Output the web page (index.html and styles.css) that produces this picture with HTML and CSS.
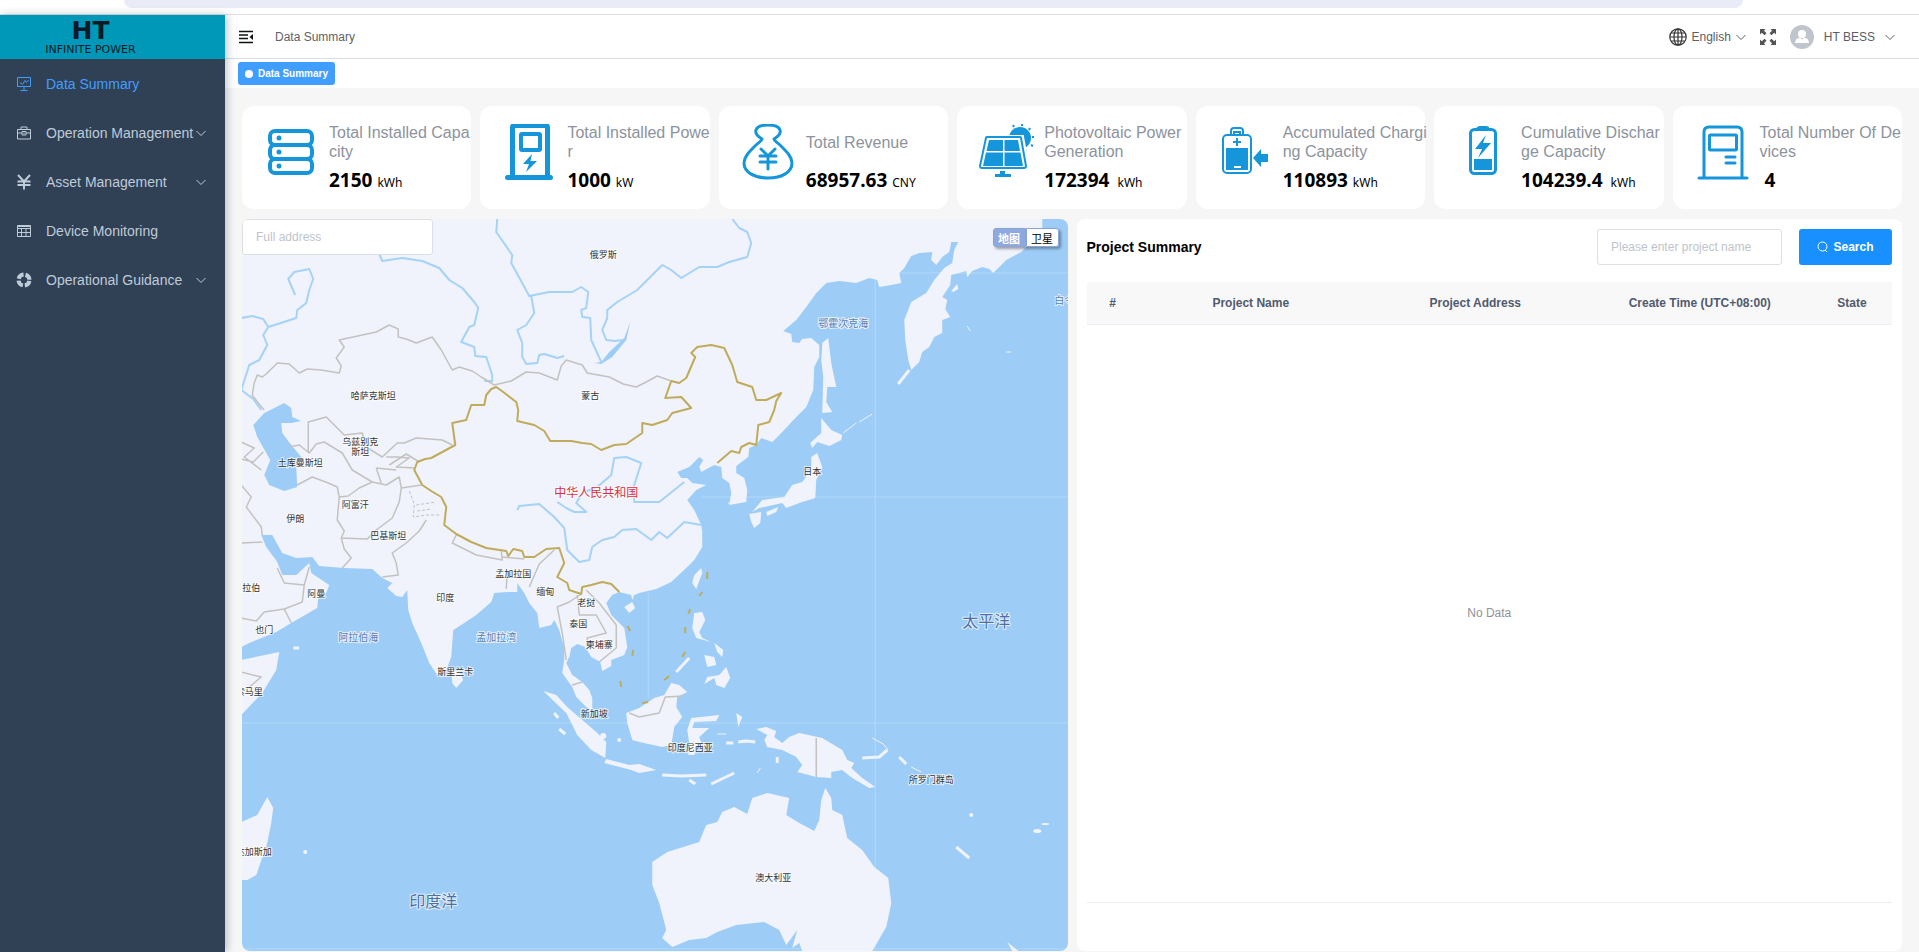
FILE: index.html
```html
<!DOCTYPE html>
<html lang="en">
<head>
    <meta charset="UTF-8">
    <meta name="viewport" content="width=device-width, initial-scale=1.0">
    <title>Data Summary</title>
    <link rel="stylesheet" href="styles.css">
</head>
<body>
    <div class="top-strip"><div class="strip-bar"></div></div>

    <div class="app">
        <!-- Sidebar -->
        <aside class="sidebar">
            <div class="logo">
                <span class="logo-name">HT</span>
                <span class="logo-sub">INFINITE POWER</span>
            </div>
            <nav>
                <a href="#" class="menu-item active">
                    <svg class="menu-icon" viewBox="0 0 16 16"><path d="M1.500 1.500h13v9h-13zM8 10.500v4M4.500 14.500h7M4 6.500l2.500 2 2.500-4 1.500 2 2-2.500"/></svg>
                    <span>Data Summary</span>
                </a>
                <a href="#" class="menu-item">
                    <svg class="menu-icon" viewBox="0 0 16 16"><path d="M1.500 4.500h13v9.500h-13zM5 4.500v-2.500h6v2.500M1.500 8h4.500M10 8h4.500M6 6.500h4v3.500h-4zM8 7.500v1.500"/></svg>
                    <span>Operation Management</span>
                    <svg class="arrow" viewBox="0 0 10 10"><path d="M.5 3l4.500 4.500L9.500 3"/></svg>
                </a>
                <a href="#" class="menu-item">
                    <svg class="menu-icon thick" viewBox="0 0 16 16"><path d="M2 1l6 6.500L14 1M8 7.500v8M1.500 7.500h13M1.500 11h13"/></svg>
                    <span>Asset Management</span>
                    <svg class="arrow" viewBox="0 0 10 10"><path d="M.5 3l4.500 4.500L9.500 3"/></svg>
                </a>
                <a href="#" class="menu-item">
                    <svg class="menu-icon" viewBox="0 0 16 16"><path d="M1.500 2.500h13v11h-13zM1.500 5.500h13M1.500 9.500h13M5.500 5.500v8M10 5.500v8M1.500 3.500h13"/></svg>
                    <span>Device Monitoring</span>
                </a>
                <a href="#" class="menu-item">
                    <svg class="menu-icon" viewBox="0 0 16 16"><circle class="ring" cx="8" cy="8" r="5.500"/></svg>
                    <span>Operational Guidance</span>
                    <svg class="arrow" viewBox="0 0 10 10"><path d="M.5 3l4.500 4.500L9.500 3"/></svg>
                </a>
            </nav>
        </aside>

        <div class="main">
            <!-- Header -->
            <header class="header">
                <button type="button" class="icon-btn" aria-label="Collapse menu">
                    <svg width="16" height="14" viewBox="0 0 16 14"><path d="M1 1.500h14M1 5h9M1 8.500h9M1 12.500h14" fill="none" stroke="#111" stroke-width="1.500"/><path d="M15 4v6l-3.500-3z" fill="#111"/></svg>
                </button>
                <span class="crumb">Data Summary</span>
                <div class="header-right">
                    <button type="button" class="icon-btn lang">
                        <svg width="18" height="18" viewBox="0 0 18 18" fill="none" stroke="#333" stroke-width="1.200"><circle cx="9" cy="9" r="8.200"/><ellipse cx="9" cy="9" rx="4" ry="8.200"/><path d="M9 1v16M1 9h16M2.200 5h13.600M2.200 13h13.600"/></svg>
                        <span>English</span>
                        <svg class="arrow" viewBox="0 0 10 10"><path d="M.5 3l4.500 4.500L9.500 3"/></svg>
                    </button>
                    <button type="button" class="icon-btn" aria-label="Full screen">
                        <svg width="16" height="16" viewBox="0 0 16 16" fill="#555"><path d="M0 0h5.500L4 1.700l2.500 2.600-2 2L1.800 3.800 0 5.500zM16 0v5.500l-1.800-1.700-2.700 2.500-2-2L12 1.700 10.500 0zM0 16v-5.500l1.800 1.700 2.700-2.500 2 2L4 14.300 5.500 16zM16 16h-5.500l1.500-1.700-2.500-2.600 2-2 2.700 2.500 1.800-1.700z"/></svg>
                    </button>
                    <button type="button" class="icon-btn user">
                        <svg width="24" height="24" viewBox="0 0 24 24"><circle cx="12" cy="12" r="12" fill="#c0c4cc"/><circle cx="12" cy="9" r="4" fill="#fff"/><path d="M5 18c0-3 2-5 5-5.500l2 2 2-2c3 .5 5 2.500 5 5.500z" fill="#fff"/></svg>
                        <span>HT BESS</span>
                        <svg class="arrow" viewBox="0 0 10 10"><path d="M.5 3l4.500 4.500L9.500 3"/></svg>
                    </button>
                </div>
            </header>
            <div class="tags">
                <a href="#" class="tag">Data Summary</a>
            </div>

            <main class="content">
                <!-- Totals -->
                <section class="cards">
                    <div class="card">
                        <svg class="card-icon" viewBox="0 0 56 56" fill="none" stroke="#1596db" stroke-width="4"><rect x="7" y="7" width="42" height="14" rx="5"/><rect x="7" y="21" width="42" height="14" rx="5"/><rect x="7" y="35" width="42" height="14" rx="5"/><g fill="#1596db" stroke="none"><circle cx="16" cy="14" r="2.500"/><circle cx="16" cy="28" r="2.500"/><circle cx="16" cy="42" r="2.500"/></g></svg>
                        <div class="card-text">
                            <p class="card-title">Total Installed Capacity</p>
                            <p class="card-value">2150 <small>kWh</small></p>
                        </div>
                    </div>
                    <div class="card">
                        <svg class="card-icon" viewBox="0 0 56 56" fill="none" stroke="#1596db" stroke-width="4"><path d="M11.500 52V3.500q0-2 2-2h31q2 0 2 2V52" stroke-width="5"/><rect x="20" y="10" width="19" height="16" rx="1"/><path d="M6.500 53.500h43" stroke-width="5" stroke-linecap="round"/><path d="M31 30L22 40h6l-3 8 11-11h-6.500z" fill="#1596db" stroke="none"/></svg>
                        <div class="card-text">
                            <p class="card-title">Total Installed Power</p>
                            <p class="card-value">1000 <small>kW</small></p>
                        </div>
                    </div>
                    <div class="card">
                        <svg class="card-icon" viewBox="0 0 56 56" fill="none" stroke="#1596db" stroke-width="3"><path d="M22 15c-5-3-7-6-6-9 1-3 6-5 12-5s11 2 12 5c1 3-1 6-6 9 0 2 3 3 7 7 6 6 11 11 11 17 0 9-10 15-24 15S4 48 4 39c0-6 5-11 11-17 4-4 7-5 7-7z"/><path d="M21 25l7 7 7-7M28 32v13M20 32h16M20 38h16" stroke-linecap="round"/></svg>
                        <div class="card-text">
                            <p class="card-title">Total Revenue</p>
                            <p class="card-value">68957.63 <small>CNY</small></p>
                        </div>
                    </div>
                    <div class="card">
                        <svg class="card-icon" viewBox="0 0 56 56"><circle cx="42" cy="14" r="11" fill="#1596db"/><path d="M44 0v2M52 4l-1 2M56 13h-2M55 22l-2-1M48 28l-1-2M35 1l1 2" stroke="#1596db" stroke-width="2"/><path d="M8 13h36l6 32H1z" fill="#fff" stroke="#fff" stroke-width="4"/><path d="M8 14q0-1 1-1h33q1 0 1 1l5 28q0 2-2 2H4q-2 0-2-2z" fill="#fff" stroke="#1596db" stroke-width="2"/><path d="M11 16h14v11H8.500zM26.500 16H40l2 11H26.500zM8 28.500h17V42H5zM26.500 28.500h16L45 42H26.500z" fill="#1596db"/><path d="M22 47h5v3h6v3H17v-3h5z" fill="#1596db"/></svg>
                        <div class="card-text">
                            <p class="card-title">Photovoltaic Power Generation</p>
                            <p class="card-value">172394 <small>&nbsp;kWh</small></p>
                        </div>
                    </div>
                    <div class="card">
                        <svg class="card-icon" viewBox="0 0 56 56" fill="none" stroke="#1596db" stroke-width="2"><rect x="6" y="11" width="28" height="38" rx="4"/><path d="M14 11V7q0-3 3-3h6q3 0 3 3v4M17 11V8h6v3M20 14v8M16 18h8"/><path d="M9 24h22v22H9z" fill="#1596db" stroke="none"/><path d="M17 43h7" stroke="#fff"/><path d="M36 34l8-9v5h7v8h-7v5z" fill="#1596db" stroke="none"/></svg>
                        <div class="card-text">
                            <p class="card-title">Accumulated Charging Capacity</p>
                            <p class="card-value">110893 <small>kWh</small></p>
                        </div>
                    </div>
                    <div class="card">
                        <svg class="card-icon" viewBox="0 0 56 56" fill="none" stroke="#1596db" stroke-width="3"><rect x="15.500" y="5.500" width="25" height="44" rx="4"/><path d="M21 5q1-3 4-3h6q3 0 4 3z" fill="#1596db" stroke="none"/><path d="M19 35h18v11H19zM31 11L20 25h7l-4 9 13-15h-8z" fill="#1596db" stroke="none"/></svg>
                        <div class="card-text">
                            <p class="card-title">Cumulative Discharge Capacity</p>
                            <p class="card-value">104239.4 <small>&nbsp;kWh</small></p>
                        </div>
                    </div>
                    <div class="card">
                        <svg class="card-icon" viewBox="0 0 56 56" fill="none" stroke="#1596db" stroke-width="3"><path d="M10 53V8q0-5 5-5h28q5 0 5 5v45"/><path d="M5 54h48" stroke-linecap="round"/><rect x="15.500" y="11" width="27" height="15" rx="1"/><path d="M32 33h9M32 39h9" stroke-linecap="round"/></svg>
                        <div class="card-text">
                            <p class="card-title">Total Number Of Devices</p>
                            <p class="card-value">&nbsp;4</p>
                        </div>
                    </div>
                </section>

                <section class="panels">
                    <!-- Map -->
                    <div class="map">
                        <svg class="map-canvas" viewBox="0 0 827 732" preserveAspectRatio="xMidYMid slice">
                            <rect class="sea" width="827" height="732"/>
                            <path class="grid" d="M634 0V732M460 278H827M0 504H827M640 54H827M407 374V480M0 730H827"/>
                            <g class="land">
                                <!-- Eurasia -->
                                <path d="M0 0H801V11L780 33 765 41 752 54 748 50 741 48 731 52 726 58 725 52 718 54 710 56 709 66 701 78 706 81 704 90 709 98 701 101 701 114 693 118 688 128 681 133 678 143 670 151 667 141 664 121 663 101 670 83 685 74 693 61 703 49 711 44 713 31 717 23 710 23 708 33 701 38 695 46 690 41 691 33 678 34 670 37 663 49 658 54 660 64 650 66 638 68 636 61 628 59 615 64 598 62 585 64 575 74 565 88 555 101 542 112 550 115 551 123 558 124 561 120 570 119 578 126 578 138 573 148 572 171 565 188 555 198 541 213 531 223 520 219 515 226 508 229 507 238 495 247 495 254 503 259 506 271 505 283 488 286 490 274 488 264 481 259 480 248 473 246 460 253 458 248 462 241 458 238 448 248 436 253 440 259 446 259 451 264 465 266 455 271 446 281 453 291 460 306 461 313 461 328 453 341 447 347 430 363 415 370 398 374 393 376 391 381 390 376 378 373 371 376 365 384 370 396 383 409 386 428 383 436 370 441 370 447 361 452 359 443 350 438 344 428 336 425 330 429 328 438 325 444 331 456 341 463 348 471 351 479 351 491 345 488 335 478 331 468 321 454 323 441 323 429 318 411 313 401 310 406 298 409 296 394 288 384 283 374 276 364 276 373 266 373 253 374 250 383 235 396 223 404 212 411 210 438 205 451 196 456 188 444 180 424 171 404 167 391 166 371 161 378 155 377 146 369 151 364 141 359 131 350 103 349 78 347 71 338 55 339 41 334 31 316 20 316 25 328 36 343 41 356 55 356 68 344 70 354 88 366 85 374 77 379 76 389 50 404 35 413 8 424 0 428z"/>
                                <!-- Africa -->
                                <path d="M0 441L38 433 35 451 21 474 0 496zM0 603L16 596 26 578 32 589 30 604 26 624 15 656 6 661 0 661z"/>
                                <!-- Islands of Asia -->
                                <path d="M210 449L218 453 222 461 215 469 211 464zM302 472L315 476 326 488 341 501 355 513 365 523 364 539 350 531 336 516 325 494zM365 540L388 546 398 545 415 551 398 554 390 551 363 544zM383 388L391 383 394 389 388 394zM385 494L386 504 391 521 398 523 421 528 430 526 433 508 441 498 435 488 436 478 446 473 438 466 430 464 423 476 413 479 398 489zM448 524L446 511 450 499 478 496 475 502 453 503 451 509 468 509 458 518 463 531 456 528 453 536 447 536zM453 394L461 393 464 401 458 413 461 419 470 423 455 419 451 409zM466 458L478 456 485 448 489 459 483 469 475 466 473 459 463 465zM463 436L473 438 475 446 466 448zM473 424L482 431 481 438 476 433zM453 356L460 349 461 354 455 370 451 364zM495 494L501 498 497 508z"/>
                                <!-- Japan and Sakhalin -->
                                <path d="M580 199L590 211 601 216 600 221 588 227 576 223 571 229 569 224 580 214zM570 238L576 234 581 248 575 261 574 279 558 284 545 289 541 284 518 289 511 293 521 281 543 278 551 266 561 263 570 251zM508 295L520 293 519 304 513 309 510 303zM525 293L537 288 535 293 526 297zM581 124L587 119 590 144 595 168 586 168 585 183 591 193 581 194 582 158 580 141zM710 72L716 65 717 70 712 73z"/>
                                <!-- New Guinea and Australia -->
                                <path d="M515 510L525 508 535 512 533 518 541 524 548 518 558 514 581 519 601 531 606 541 613 544 610 549 621 559 634 568 628 569 611 559 601 551 590 553 590 559 575 558 556 553 561 546 555 538 541 531 526 528 523 521 526 516zM411 643L426 633 458 623 465 606 476 603 481 593 493 588 506 595 511 579 526 574 548 579 545 596 558 604 573 612 578 601 580 581 584 569 590 579 591 591 601 596 606 619 621 631 633 648 647 659 650 684 645 708 631 732 561 732 558 724 551 729 556 711 545 726 538 711 523 703 495 706 476 713 465 719 448 721 431 728 421 719 425 711 418 684 411 666zM766 723L777 732 771 732z"/>
                                <ellipse cx="796" cy="612" rx="4" ry="2"/><ellipse cx="804" cy="605" rx="4" ry="1"/><circle cx="730" cy="596" r="2"/><circle cx="64" cy="633" r="2"/><circle cx="378" cy="521" r="2"/><circle cx="362" cy="517" r="3"/>
                            </g>
                            <path class="isles" d="M448 439L435 453M421 556L440 557 465 556M448 561L454 565M470 565L493 554M497 523L505 522 514 523M485 524H492M621 539L638 538 646 531M658 538L665 545M668 151L657 165M715 628L728 639M52 429H58M536 538V544M318 510L324 515M313 494L317 499"/>
                            <path class="isles thin" d="M631 519L642 525 647 531M602 214L615 204M618 203L631 195M726 107L729 112M765 133H770M519 549L516 554M670 548L680 553M690 556L702 566M476 515H485M487 284H492"/>
                            <!-- Lakes -->
                            <path class="sea" d="M12 206L23 194 43 184 50 189 51 198 60 202 50 204 40 204 41 214 50 226 60 238 55 248 56 268 43 272 28 266 23 256 29 241 16 218zM389 103L385 121 371 138 360 145 353 144 360 143 368 133 383 119z"/>
                            <g class="river">
                                <path d="M138 35L141 42 161 39 181 42 198 49 208 61 221 69 233 83 237 89 233 106 228 108 220 123 233 128 234 137 245 138 251 156 251 162 243 162"/>
                                <path d="M256 0L255 13 271 36 270 44 288 77 308 73 331 73 340 68 347 73 345 89 340 91 341 98 349 99 350 121 360 143M290 77L293 94 285 106 276 111 281 124 281 138 285 145 296 144 298 136 303 135 316 139 323 137"/>
                                <path d="M491 0L498 9 506 13 510 24 506 38 488 43 476 48 458 48 440 59 430 51 421 46 411 56 396 71 376 83 366 91 366 99 361 111 365 121 374 122 381 121"/>
                                <path d="M0 99L11 97 22 100 27 108 55 99 56 91 65 84 68 71 72 60 68 50 53 53 47 60 54 76M27 108L22 116 26 126 18 141 8 146 0 171 12 180 20 191"/>
                                <path d="M276 291L278 287 298 285 313 298 323 309 326 331 338 343 348 341 351 328 361 321 373 318 381 311 395 310 410 321 418 313 426 319 443 303 460 306"/>
                                <path d="M316 283L325 289 333 293 345 293 335 284 341 274 356 268 370 256 373 239 385 238 400 244 393 266 393 283 418 283 443 263"/>
                            </g>
                            <g class="border">
                                <path d="M23 191L17 184 11 176 13 164 16 156 21 158 25 155 36 144 48 145 58 154 66 150 80 151 98 154 100 147 95 139 103 128 98 121 135 113 148 106 157 110 157 118 165 120 175 124 191 118 200 131 211 151 218 148 231 152 240 158 253 166 270 162 285 153 298 154 316 161 320 147 325 141 341 146 346 154 368 158 382 165 395 168 405 163 416 157 430 162"/>
                                <path d="M67 233V203L85 198 103 216 121 214 125 228 141 238 156 224 163 224 175 219 201 221 211 226M48 228L58 226 68 234 75 225 83 223 101 234 111 251 131 263 118 269 107 277 98 278 96 268 87 264 71 258 56 266"/>
                                <path d="M98 278L96 301 103 312 100 319 126 320 135 311 151 299 158 283 160 269 180 266M131 263L145 266 158 258 160 269M100 319L103 330 110 339 101 349M185 301L178 312 165 324 151 334 155 344 157 356 141 358"/>
                                <path d="M135 249L140 264M145 238L156 238 168 239 155 248 173 249M148 246L165 235 178 243M135 249L155 251M215 316L211 324 235 336 261 341 260 331M261 338L283 340M266 351L265 370M313 331L298 345 288 368"/>
                                <path d="M340 375L328 383 316 388 321 414 325 441M336 376L338 396 355 396 365 414 346 419 346 431M345 371L358 384 375 406 375 429 358 443M331 466L341 463"/>
                                <path d="M0 223L13 229 3 238 20 251M0 240L12 243 22 233M0 266L10 278 5 288 20 308 21 316M0 324L21 323M0 399L15 402 23 393 43 390 61 383 63 366 68 348M36 349L43 364 63 366M43 390L50 404M0 453L20 458 8 468"/>
                                <path d="M388 494L398 498 418 494 424 478 443 477M575 519V558"/>
                                <path class="dotted" d="M168 272L173 285 172 298 185 296 200 296M175 286L195 283M176 292L190 290"/>
                            </g>
                            <path class="china" d="M476 244L490 232 498 234 500 228 508 224 515 226 517 206 528 203 533 191 535 182 540 174 525 181 515 181 511 168 496 163 491 146 483 129 470 126 456 128 450 134 454 138 445 159 438 164 430 162 424 179 440 178 450 189 431 194 426 201 411 206 401 204 401 214 385 225 373 226 360 231 350 225 341 224 330 222 309 222 303 212 293 206 276 202 277 191 275 183 262 173 255 168 250 170 245 176 243 186 230 186 225 201 211 204 214 226 190 239 184 240 176 243 173 251 181 266 190 272 200 278 205 288 203 306 215 315 230 323 245 329 265 332 267 337 272 330 281 332 283 338 293 338 305 330 318 329 323 344 316 358 326 364 328 371 340 375 341 368 350 366 361 363 370 365 378 373"/>
                            <path class="china" d="M466 353V360M461 373L458 377M449 390L447 395M444 408V414M444 433L441 438M428 457L423 461M407 483L401 484M386 407L389 412M392 431L391 437M379 462L380 468"/>
                            <g class="label">
                                <text x="362" y="39">俄罗斯</text>
                                <text x="132" y="180">哈萨克斯坦</text>
                                <text x="349" y="180">蒙古</text>
                                <text x="119" y="226">乌兹别克</text>
                                <text x="119" y="236">斯坦</text>
                                <text x="59" y="247">土库曼斯坦</text>
                                <text x="114" y="289">阿富汗</text>
                                <text x="54" y="303">伊朗</text>
                                <text x="147" y="320">巴基斯坦</text>
                                <text x="272" y="358">孟加拉国</text>
                                <text x="571" y="256">日本</text>
                                <text x="10" y="372">拉伯</text>
                                <text x="75" y="378">阿曼</text>
                                <text x="204" y="382">印度</text>
                                <text x="304" y="376">缅甸</text>
                                <text x="345" y="387">老挝</text>
                                <text x="337" y="408">泰国</text>
                                <text x="358" y="429">柬埔寨</text>
                                <text x="23" y="414">也门</text>
                                <text x="214" y="456">斯里兰卡</text>
                                <text x="8" y="476">索马里</text>
                                <text x="353" y="498">新加坡</text>
                                <text x="449" y="532">印度尼西亚</text>
                                <text x="690" y="564">所罗门群岛</text>
                                <text x="532" y="662">澳大利亚</text>
                                <text x="8" y="636">马达加斯加</text>
                            </g>
                            <g class="label water">
                                <text x="602" y="108">鄂霍次克海</text>
                                <text x="828" y="85">白令海</text>
                                <text x="117" y="422">阿拉伯海</text>
                                <text x="255" y="422">孟加拉湾</text>
                            </g>
                            <g class="label ocean">
                                <text x="745" y="408">太平洋</text>
                                <text x="192" y="688">印度洋</text>
                            </g>
                            <text class="label capital" x="355" y="278">中华人民共和国</text>
                        </svg>
                        <input type="text" class="text-input map-search" placeholder="Full address" aria-label="Full address">
                        <div class="map-type">
                            <button type="button" class="selected">地图</button>
                            <button type="button">卫星</button>
                        </div>
                    </div>

                    <!-- Projects -->
                    <div class="projects">
                        <form class="projects-head">
                            <h2>Project Summary</h2>
                            <input type="text" class="text-input" placeholder="Please enter project name" aria-label="Project name">
                            <button type="button" class="search-btn">
                                <svg width="12" height="12" viewBox="0 0 12 12" fill="none" stroke="#fff"><circle cx="5.500" cy="5.500" r="4.500"/><path d="M8 9l2 2"/></svg>
                                <span>Search</span>
                            </button>
                        </form>
                        <table>
                            <thead>
                                <tr>
                                    <th class="col-index">#</th>
                                    <th>Project Name</th>
                                    <th>Project Address</th>
                                    <th>Create Time (UTC+08:00)</th>
                                    <th class="col-state">State</th>
                                </tr>
                            </thead>
                        </table>
                        <div class="empty">No Data</div>
                    </div>
                </section>
            </main>
        </div>
    </div>
</body>
</html>
```

FILE: styles.css
```css
* {
    box-sizing: border-box;
}

body {
    margin: 0;
    min-height: 100vh;
    display: flex;
    flex-direction: column;
    font-family: "Liberation Sans", Arial, "Noto Sans CJK SC", sans-serif;
    font-size: 12px;
    color: #606266;
    background-color: #fff;
}

p, h2 {
    margin: 0;
}

button {
    font-family: inherit;
    cursor: pointer;
}

.top-strip {
    height: 15px;
    padding: 0 176px 0 124px;
    border-bottom: 1px solid #dfe1e0;
}

.strip-bar {
    height: 8px;
    background-color: #e9ecf7;
    border-radius: 0 0 12px 12px;
}

.app {
    flex: 1;
    display: flex;
}

/* Sidebar */
.sidebar {
    width: 225px;
    flex-shrink: 0;
    background-color: #304156;
    box-shadow: 2px 0 8px rgba(0, 21, 41, .25);
    z-index: 1;
}

.logo {
    height: 44px;
    padding-right: 44px;
    display: flex;
    flex-direction: column;
    align-items: center;
    justify-content: center;
    gap: 3px;
    font-family: "DejaVu Sans", sans-serif;
    color: #0b1a26;
    background-color: #0098b8;
}

.logo-name {
    font-size: 25px;
    line-height: 22px;
    font-weight: bold;
}

.logo-sub {
    font-size: 11px;
    line-height: 10px;
}

.menu-item {
    display: flex;
    align-items: center;
    height: 49px;
    padding: 0 19px 0 16px;
    font-size: 14px;
    color: #bfcbd9;
    text-decoration: none;
}

.menu-item span {
    flex: 1;
    white-space: nowrap;
}

.menu-item.active {
    color: #409eff;
}

.menu-icon {
    width: 16px;
    height: 16px;
    flex-shrink: 0;
    margin-right: 14px;
    fill: none;
    stroke: currentColor;
}

.menu-icon.thick {
    stroke-width: 2;
}

.ring {
    stroke-width: 4;
    stroke-dasharray: 6.600 2;
    stroke-dashoffset: -1;
}

.arrow {
    width: 10px;
    height: 10px;
    flex-shrink: 0;
    fill: none;
    stroke: currentColor;
}

.main {
    flex: 1;
    min-width: 0;
    display: flex;
    flex-direction: column;
}

/* Header */
.header {
    height: 44px;
    padding: 0 24px 0 13px;
    display: flex;
    align-items: center;
    border-bottom: 1px solid #d8dce5;
}

.crumb {
    margin-left: 21px;
}

.header-right {
    margin-left: auto;
    display: flex;
    align-items: center;
    gap: 14px;
}

.icon-btn {
    display: flex;
    align-items: center;
    padding: 0;
    border: 0;
    background: none;
    font-size: 12px;
    color: #5a5e66;
}

.lang {
    gap: 5px;
}

.user {
    gap: 10px;
}

.tags {
    height: 29px;
    padding: 3px 13px;
}

.tag {
    display: inline-flex;
    align-items: center;
    gap: 5px;
    height: 23px;
    padding: 0 7px;
    border-radius: 3px;
    font-size: 10px;
    font-weight: bold;
    color: #fff;
    text-decoration: none;
    background-color: #409eff;
}

.tag::before {
    content: "";
    width: 8px;
    height: 8px;
    border-radius: 50%;
    background-color: #fff;
}

.content {
    flex: 1;
    display: flex;
    flex-direction: column;
    gap: 10px;
    padding: 18px 17px 1px;
    background-color: #f6f6f6;
}

/* Cards */
.cards {
    display: flex;
    gap: 9px;
}

.card {
    flex: 1;
    min-width: 0;
    height: 103px;
    display: flex;
    padding: 16px 0 0 21px;
    border-radius: 12px;
    background-color: #fff;
}

.card-icon {
    width: 56px;
    height: 56px;
    flex-shrink: 0;
    margin: 2px 10px 0 0;
}

.card-text {
    flex: 1;
    min-width: 0;
    margin-right: -3px;
}

.card-title {
    height: 40px;
    display: flex;
    align-items: center;
    font-size: 16px;
    line-height: 19px;
    color: #8c939d;
    word-break: break-all;
}

.card-value {
    font-family: "Noto Sans", sans-serif;
    font-size: 19px;
    line-height: 36px;
    font-weight: bold;
    color: #000;
    white-space: nowrap;
}

.card-value small {
    font-size: 12px;
    font-weight: normal;
}

.panels {
    flex: 1;
    display: grid;
    grid-template-columns: 1fr 1fr;
    gap: 9px;
}

/* Map */
.map {
    position: relative;
    border-radius: 8px;
    overflow: hidden;
}

.map-canvas {
    position: absolute;
    width: 100%;
    height: 100%;
}

.sea {
    fill: #9dcdf7;
}

.grid {
    fill: none;
    stroke: #b0d8fa;
}

.land {
    fill: #f0f3fb;
}

.isles {
    fill: none;
    stroke: #f0f3fb;
    stroke-width: 3;
    stroke-linejoin: round;
}

.isles.thin {
    stroke-width: 1;
}

.river {
    fill: none;
    stroke: #a5d2f7;
    stroke-width: 2;
    stroke-linejoin: round;
}

.border {
    fill: none;
    stroke: #c3c2c0;
    stroke-width: 1.500;
    stroke-linejoin: round;
}

.dotted {
    stroke-width: 1;
    stroke-dasharray: 3 2;
}

.china {
    fill: none;
    stroke: #bfab5c;
    stroke-width: 2;
    stroke-linejoin: round;
}

.label {
    font-family: "Noto Sans CJK SC", sans-serif;
    font-size: 9px;
    text-anchor: middle;
    fill: #333;
    stroke: #fff;
    stroke-width: 2;
    stroke-opacity: .7;
    paint-order: stroke;
}

.water {
    font-size: 10px;
    fill: #5a7fb8;
}

.ocean {
    font-size: 16px;
    fill: #4d6ea8;
}

.capital {
    font-size: 12px;
    fill: #d8303c;
}

.text-input {
    width: 185px;
    height: 36px;
    padding: 0 13px;
    border: 1px solid #dcdfe6;
    border-radius: 3px;
    font-family: inherit;
    font-size: 12px;
    color: #606266;
    background-color: #fff;
}

.text-input::placeholder {
    color: #c0c4cc;
}

.map-search {
    position: absolute;
    top: 0;
    left: 0;
    width: 191px;
}

.map-type {
    position: absolute;
    top: 9px;
    right: 9px;
    display: flex;
    border-radius: 3px;
    box-shadow: 2px 2px 3px rgba(0, 0, 0, .35);
}

.map-type button {
    width: 33px;
    height: 19px;
    padding: 0;
    border: 1px solid #8ba4d8;
    border-radius: 0 3px 3px 0;
    font-family: "Noto Sans CJK SC", sans-serif;
    font-size: 11px;
    line-height: 16px;
    color: #000;
    background-color: #fff;
}

.map-type .selected {
    border-radius: 3px 0 0 3px;
    font-weight: bold;
    color: #fff;
    background-color: #8ea8e0;
}

/* Projects */
.projects {
    display: flex;
    flex-direction: column;
    padding: 10px 10px 48px;
    border-radius: 8px;
    background-color: #fff;
}

.projects-head {
    display: flex;
    align-items: center;
    margin-bottom: 17px;
}

.projects-head h2 {
    margin-right: auto;
    font-size: 14px;
    color: #000;
}

.search-btn {
    display: flex;
    align-items: center;
    justify-content: center;
    gap: 4px;
    width: 93px;
    height: 36px;
    margin-left: 17px;
    border: 0;
    border-radius: 3px;
    font-size: 12px;
    font-weight: bold;
    color: #fff;
    background-color: #1890ff;
}

table {
    width: 100%;
    table-layout: fixed;
    border-collapse: collapse;
}

th {
    height: 42px;
    padding: 0;
    font-size: 12px;
    color: #515a6e;
    background-color: #f8f8f9;
    border-bottom: 1px solid #ebeef5;
}

.col-index {
    width: 52px;
}

.col-state {
    width: 80px;
}

.empty {
    flex: 1;
    display: flex;
    align-items: center;
    justify-content: center;
    color: #909399;
    border-bottom: 1px solid #ebeef5;
}
```
